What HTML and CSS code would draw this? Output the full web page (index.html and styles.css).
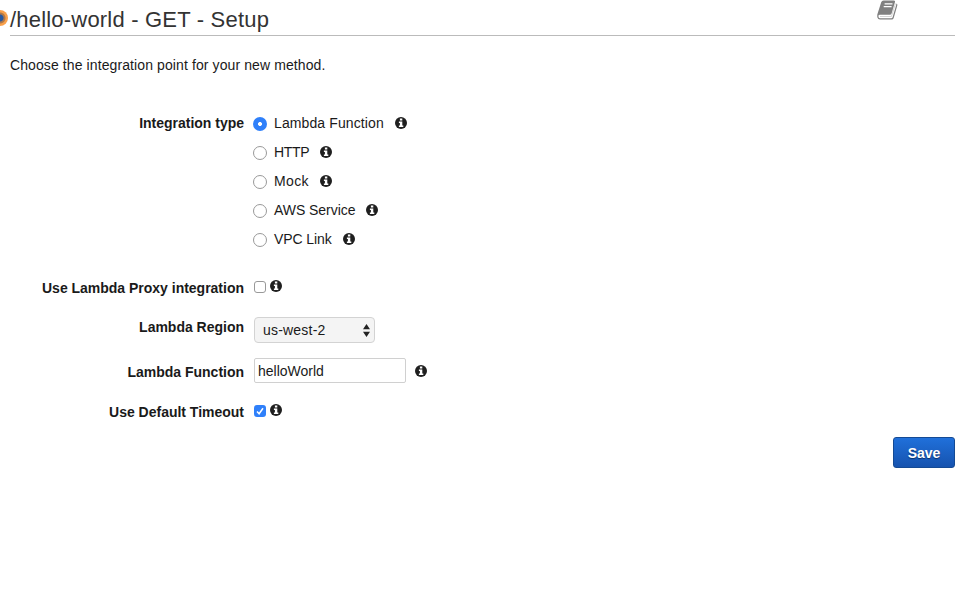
FILE: index.html
```html
<!DOCTYPE html>
<html lang="en">
<head>
<meta charset="utf-8">
<title>Method setup</title>
<link rel="stylesheet" href="styles.css">
</head>
<body>
<svg class="defs" aria-hidden="true">
  <symbol id="info" viewBox="0 0 12 12">
    <circle cx="6" cy="6" r="6" fill="#1f1f1f"/>
    <path d="M4.900 1.500h2.400v2H4.900zM3.900 4.500h3.400v4H8.300V10H3.900V8.500h1V6h-1z" fill="#fff"/>
  </symbol>
</svg>
<header class="header">
  <span class="badge"></span>
  <h1 class="title">/hello-world - GET - Setup</h1>
  <svg class="book" viewBox="0 0 21 20">
    <path d="M6.500.5H17q1.500 0 1 1.500L14.600 13.500q-.4 1.300-1.900 1.300H2.600Q1 14.800 1.500 17q.3 1.200 1.700 1.200H14.300q1 0 1.300-1L19.200 5q.2-.8.1-1.500 1.500.5 1 2L16.700 18q-.5 1.600-2 1.600H3Q.9 19.600.4 17.600.1 16.500.3 14.500L4.200 2.300Q4.800.5 6.500.5z" fill="#808080"/>
    <path d="M3 16.500H14.400L18.500 3.500" fill="none" stroke="#aaa" stroke-width=".5"/>
    <path d="M7.600 3.900h7.900M6.700 6.700h7.900" stroke="#fff" stroke-width="1.200"/>
  </svg>
</header>
<main class="main">
  <p class="intro">Choose the integration point for your new method.</p>
  <form class="form">
    <div class="row types">
      <span class="label">Integration type</span>
      <div class="options">
        <label class="option"><span class="radio on"></span><span class="name">Lambda Function</span><svg class="info"><use href="#info"/></svg></label>
        <label class="option"><span class="radio"></span><span class="name http">HTTP</span><svg class="info"><use href="#info"/></svg></label>
        <label class="option"><span class="radio"></span><span class="name mock">Mock</span><svg class="info"><use href="#info"/></svg></label>
        <label class="option"><span class="radio"></span><span class="name aws">AWS Service</span><svg class="info"><use href="#info"/></svg></label>
        <label class="option"><span class="radio"></span><span class="name vpc">VPC Link</span><svg class="info"><use href="#info"/></svg></label>
      </div>
    </div>
    <div class="row proxy">
      <span class="label">Use Lambda Proxy integration</span>
      <span class="check"></span><svg class="info"><use href="#info"/></svg>
    </div>
    <div class="row region">
      <span class="label">Lambda Region</span>
      <div class="select"><span>us-west-2</span>
        <svg class="arrows" viewBox="0 0 7 13"><path d="M3.500 0 7 5.200H0zM3.500 13 0 7.800h7z" fill="#222"/></svg>
      </div>
    </div>
    <div class="row function">
      <span class="label">Lambda Function</span>
      <div class="input">helloWorld</div><svg class="info"><use href="#info"/></svg>
    </div>
    <div class="row timeout">
      <span class="label">Use Default Timeout</span>
      <span class="check on"><svg viewBox="0 0 12 12"><path d="M3 6.400 5.100 8.700 9 3.300" fill="none" stroke="#fff" stroke-width="1.500"/></svg></span><svg class="info"><use href="#info"/></svg>
    </div>
    <div class="actions"><button class="save" type="button">Save</button></div>
  </form>
</main>
</body>
</html>
```
FILE: styles.css
```css
* { box-sizing: border-box; }
body {
  margin: 0;
  height: 610px;
  overflow: hidden;
  background: #fff;
  color: #1a1a1a;
  font: 14px/20px "Liberation Sans", Arial, sans-serif;
  letter-spacing: 0.1px;
}
.defs { position: absolute; width: 0; height: 0; }
.header {
  position: relative;
  display: flex;
  height: 36px;
  margin: 0 7px 0 10px;
  border-bottom: 1px solid #bbb;
}
.badge {
  position: absolute;
  left: -18px;
  top: 10px;
  width: 16px;
  height: 16px;
  border-radius: 50%;
  background: radial-gradient(circle, #2858a0 0 3px, #b07848 4px 5px, #f9a04a 6px);
}
.title {
  position: relative;
  margin: 5px 0 0;
  font-size: 22px;
  line-height: 30px;
  font-weight: 400;
  letter-spacing: 0.2px;
  color: #333;
  white-space: nowrap;
}
.book { width: 21px; height: 20px; margin: 0 57px 0 auto; }
.intro { margin: 19px 0 0 10px; }
.form { padding: 34px 7px 0 0; }
.row { display: flex; align-items: center; }
.label {
  width: 244px;
  flex: none;
  text-align: right;
  font-weight: 700;
  letter-spacing: -0.01px;
}
.types { align-items: flex-start; }
.types .label { line-height: 29px; }
.options { margin: -1px 0 1px 9px; }
.option { display: flex; align-items: center; height: 29px; }
.name { letter-spacing: 0.11px; }
.http { letter-spacing: -0.36px; }
.mock { letter-spacing: 0.36px; }
.aws { letter-spacing: -0.05px; }
.vpc { letter-spacing: -0.1px; }
.radio {
  width: 14px;
  height: 14px;
  margin: 2px 7px 0 0;
  border: 1px solid #999;
  border-radius: 50%;
  background: #fff;
}
.radio.on { border: 0; background: radial-gradient(circle, #fff 0 1.6px, #2f80fa 2.3px); }
.info { width: 12px; height: 12px; flex: none; }
.option .info { margin-left: 11px; }
.proxy { height: 30px; margin-top: 18px; }
.proxy .label, .timeout .label { margin-top: 2px; }
.check {
  width: 12px;
  height: 12px;
  margin: 0 4px 0 10px;
  border: 1px solid #999;
  border-radius: 3px;
}
.check.on { border: 0; background: #2f80fa; }
.check svg { display: block; }
.check + .info { margin-top: -2px; }
.region { height: 26px; margin-top: 15px; }
.region .label { margin-top: -6px; }
.select {
  display: flex;
  align-items: center;
  justify-content: space-between;
  width: 121px;
  height: 26px;
  margin-left: 10px;
  padding: 0 4px 0 8px;
  border: 1px solid #d3d3d3;
  border-radius: 4px;
  background: #f4f4f4;
  letter-spacing: 0.2px;
}
.arrows { width: 7px; height: 13px; }
.function { height: 25px; margin-top: 15px; }
.function .label { margin-top: 2px; }
.input {
  width: 152px;
  height: 25px;
  margin: 0 9px 0 10px;
  padding: 2px 3px;
  border: 1px solid #d0d0d0;
  border-radius: 2px;
  letter-spacing: 0;
}
.timeout { height: 28px; margin-top: 14px; }
.actions { display: flex; justify-content: flex-end; margin-top: 12px; }
.save {
  width: 62px;
  height: 31px;
  padding: 0;
  border: 1px solid #144a94;
  border-radius: 3px;
  background: linear-gradient(#2070da, #1653af);
  color: #fff;
  font: 700 14px/20px "Liberation Sans", Arial, sans-serif;
  text-shadow: 0 1px 1px #0b2f66;
}
```
